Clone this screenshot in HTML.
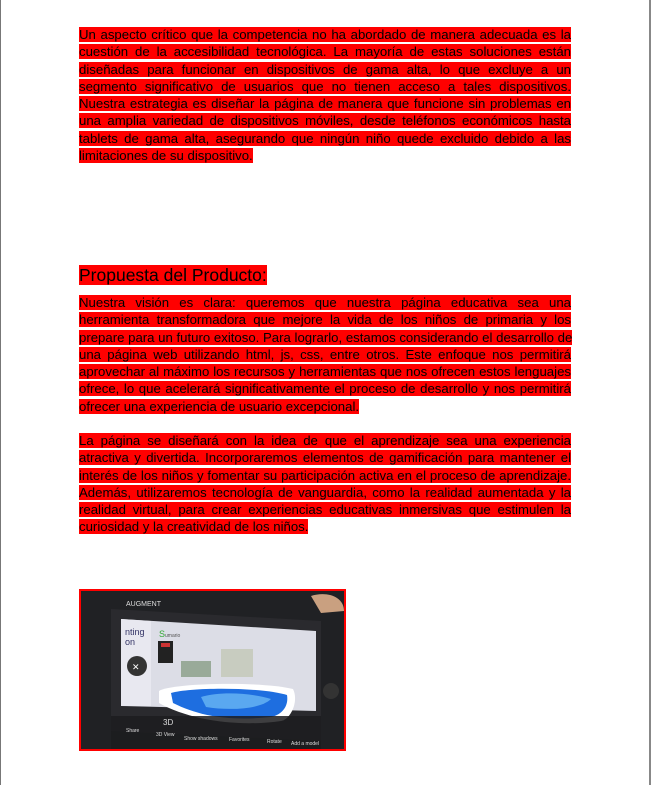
<!DOCTYPE html>
<html><head><meta charset="utf-8"><style>
html,body{margin:0;padding:0;background:#fff;}
body{width:651px;height:785px;position:relative;overflow:hidden;font-family:"Liberation Sans",Arial,sans-serif;}
.bl{position:absolute;left:0;top:0;width:1px;height:785px;background:#777;}
.br{position:absolute;left:649px;top:0;width:2px;height:785px;background:#888;}
.p{position:absolute;left:79px;width:492px;font-size:13.2px;line-height:17.3px;color:#000;margin:0;}
.p div{height:17.3px;white-space:nowrap;text-align:justify;text-align-last:justify;}
.p div.l{text-align-last:left;}
.p span,h2 span{background:#f00;}
h2{position:absolute;left:79px;top:264px;margin:0;font-weight:normal;font-size:17.5px;line-height:22px;}
.img{position:absolute;left:79px;top:589px;width:263px;height:158px;border:2px solid #f00;background:#1a1a1c;overflow:hidden;}
</style></head><body>
<div class="bl"></div><div class="br"></div>
<div class="p" style="top:26px">
<div><span>Un aspecto crítico que la competencia no ha abordado de manera adecuada es la</span></div>
<div><span>cuestión de la accesibilidad tecnológica. La mayoría de estas soluciones están</span></div>
<div><span>diseñadas para funcionar en dispositivos de gama alta, lo que excluye a un</span></div>
<div><span>segmento significativo de usuarios que no tienen acceso a tales dispositivos.</span></div>
<div><span>Nuestra estrategia es diseñar la página de manera que funcione sin problemas en</span></div>
<div><span>una amplia variedad de dispositivos móviles, desde teléfonos económicos hasta</span></div>
<div><span>tablets de gama alta, asegurando que ningún niño quede excluido debido a las</span></div>
<div class="l"><span>limitaciones de su dispositivo.</span></div>
</div>
<h2><span>Propuesta del Producto:</span></h2>
<div class="p" style="top:294px">
<div><span>Nuestra visión es clara: queremos que nuestra página educativa sea una</span></div>
<div><span>herramienta transformadora que mejore la vida de los niños de primaria y los</span></div>
<div><span>prepare para un futuro exitoso. Para lograrlo, estamos considerando el desarrollo de</span></div>
<div><span>una página web utilizando html, js, css, entre otros. Este enfoque nos permitirá</span></div>
<div><span>aprovechar al máximo los recursos y herramientas que nos ofrecen estos lenguajes</span></div>
<div><span>ofrece, lo que acelerará significativamente el proceso de desarrollo y nos permitirá</span></div>
<div class="l"><span>ofrecer una experiencia de usuario excepcional.</span></div>
</div>
<div class="p" style="top:432px">
<div><span>La página se diseñará con la idea de que el aprendizaje sea una experiencia</span></div>
<div><span>atractiva y divertida. Incorporaremos elementos de gamificación para mantener el</span></div>
<div><span>interés de los niños y fomentar su participación activa en el proceso de aprendizaje.</span></div>
<div><span>Además, utilizaremos tecnología de vanguardia, como la realidad aumentada y la</span></div>
<div><span>realidad virtual, para crear experiencias educativas inmersivas que estimulen la</span></div>
<div class="l"><span>curiosidad y la creatividad de los niños.</span></div>
</div>
<div class="img">
<svg width="263" height="158" viewBox="0 0 263 158">
<rect width="263" height="158" fill="#202124"/>
<polygon points="30,18 240,30 240,150 30,140" fill="#2a2a2e"/>
<polygon points="40,28 235,40 235,120 40,115" fill="#dcdde6"/>
<polygon points="40,28 70,30 70,115 40,115" fill="#e8e8f0"/>
<rect x="77" y="50" width="15" height="22" fill="#222"/>
<rect x="80" y="52" width="9" height="4" fill="#c33"/>
<rect x="140" y="58" width="32" height="28" fill="#c8ccc0"/>
<rect x="100" y="70" width="30" height="16" fill="#9a9"/>
<text x="78" y="46" font-size="9" fill="#3a3" font-family="Liberation Sans">S<tspan font-size="5" fill="#555">umario</tspan></text>
<text x="44" y="44" font-size="9" fill="#336" font-family="Liberation Sans">nting</text>
<text x="44" y="54" font-size="9" fill="#336" font-family="Liberation Sans">on</text>
<text x="45" y="15" font-size="7" fill="#ddd" font-family="Liberation Sans">AUGMENT</text>
<path d="M78,100 C90,92 180,90 212,98 C218,110 210,128 200,130 C160,136 110,130 78,112Z" fill="#fff"/>
<path d="M90,102 C110,96 180,96 206,104 C208,116 200,124 190,126 C150,130 120,126 92,112Z" fill="#1e6ee0"/>
<path d="M120,106 C140,100 170,102 190,108 C180,118 150,120 125,116Z" fill="#5aa8f0"/>
<circle cx="56" cy="75" r="10" fill="#333"/>
<text x="51" y="79" font-size="9" fill="#fff" font-family="DejaVu Sans">✕</text>
<circle cx="250" cy="100" r="8" fill="#333"/>
<rect x="30" y="125" width="210" height="33" fill="#1c1c1e" opacity="0.85"/>
<g font-size="5" fill="#ddd" font-family="Liberation Sans">
<text x="45" y="141">Share</text><text x="75" y="145">3D View</text><text x="103" y="149">Show shadows</text>
<text x="148" y="150">Favorites</text><text x="186" y="152">Rotate</text><text x="210" y="154">Add a model</text>
<text x="82" y="134" font-size="8">3D</text></g>
<path d="M230,5 C245,0 263,5 263,20 L240,22Z" fill="#c9a080"/>
</svg>
</div>
</body></html>
